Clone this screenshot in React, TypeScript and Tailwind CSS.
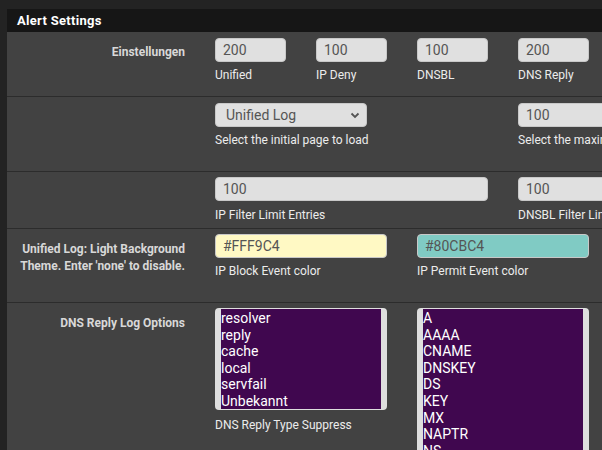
import React from "react";

const font = { fontFamily: "Roboto, 'Liberation Sans', sans-serif" };

function TextBox({ value, width, bg = "bg-[#e0e0e0]" }: { value: string; width: string; bg?: string }) {
  return (
    <div
      className={`${width} ${bg} h-[24px] rounded-[4px] border border-[#c8c8c8] pl-[7px] flex items-center text-[14px] text-[#555]`}
    >
      {value}
    </div>
  );
}

function Help({ children, mt = "mt-[6px]" }: { children: React.ReactNode; mt?: string }) {
  return <div className={`${mt} text-[12px] leading-[14px] text-[#ececec] whitespace-nowrap`}>{children}</div>;
}

function RowLabel({ children, top = "pt-[12px]" }: { children?: React.ReactNode; top?: string }) {
  return (
    <div className={`w-[208px] shrink-0 pr-[30px] ${top} text-right text-[12px] leading-[17px] font-bold text-[#d8d8d8]`}>
      {children}
    </div>
  );
}

function ListBox({ items, height }: { items: string[]; height: string }) {
  return (
    <div className={`${height} w-full rounded-[4px] bg-[#dedede] px-[6px] py-[1px] overflow-hidden`}>
      <div className="h-full bg-[#40074f] text-white text-[14px] leading-[16.6px] pt-[1px]">
        {items.map((it) => (
          <div key={it}>{it}</div>
        ))}
      </div>
    </div>
  );
}

export default function App() {
  return (
    <div className="w-[602px] h-[450px] overflow-hidden bg-[#232323] pt-[9px] pl-[7px]" style={font}>
      <div className="w-[800px]">
        {/* Header */}
        <div className="h-[23px] bg-[#161616] pl-[10px] flex items-center text-[13px] font-bold text-white tracking-[0.3px]">
          Alert Settings
        </div>

        <div className="bg-[#424242] h-[420px]">
          {/* Row 1 */}
          <div className="flex h-[64px] pt-[6px]">
            <RowLabel top="pt-[6px]">Einstellungen</RowLabel>
            <div className="flex">
              {[
                ["200", "Unified"],
                ["100", "IP Deny"],
                ["100", "DNSBL"],
                ["200", "DNS Reply"],
              ].map(([v, l], i) => (
                <div key={i} className="w-[101px] pr-[30px]">
                  <TextBox value={v} width="w-[71px]" />
                  <Help>{l}</Help>
                </div>
              ))}
            </div>
          </div>

          {/* Row 2 */}
          <div className="flex h-[75px] pt-[5px] border-t border-[#2c2c2c]">
            <RowLabel />
            <div className="flex">
              <div className="w-[303px] pr-[30px] pt-[1px]">
                <div className="w-[152px] h-[24px] rounded-[4px] bg-[#e0e0e0] border border-[#c8c8c8] pl-[10px] pr-[6px] flex items-center justify-between text-[14px] text-[#555]">
                  <span>Unified Log</span>
                  <svg width="10" height="8" viewBox="0 0 10 8" fill="none">
                    <path d="M1.5 2.5L5 6L8.5 2.5" stroke="#555" strokeWidth="1.8" />
                  </svg>
                </div>
                <Help>Select the initial page to load</Help>
              </div>
              <div className="w-[202px] pt-[1px]">
                <TextBox value="100" width="w-[172px]" />
                <Help>Select the maximum number of entries</Help>
              </div>
            </div>
          </div>

          {/* Row 3 */}
          <div className="flex h-[57px] pt-[5px] border-t border-[#2c2c2c]">
            <RowLabel />
            <div className="flex">
              <div className="w-[303px] pr-[30px]">
                <TextBox value="100" width="w-[273px]" />
                <Help mt="mt-[7px]">IP Filter Limit Entries</Help>
              </div>
              <div className="w-[303px]">
                <TextBox value="100" width="w-[273px]" />
                <Help mt="mt-[7px]">DNSBL Filter Limit Entries</Help>
              </div>
            </div>
          </div>

          {/* Row 4 */}
          <div className="flex h-[74px] pt-[5px] border-t border-[#2c2c2c]">
            <RowLabel top="pt-[7px]">
              Unified Log: Light Background
              <br />
              Theme. Enter 'none' to disable.
            </RowLabel>
            <div className="flex">
              <div className="w-[202px] pr-[30px]">
                <TextBox value="#FFF9C4" width="w-[172px]" bg="bg-[#fff9c4]" />
                <Help>IP Block Event color</Help>
              </div>
              <div className="w-[202px] pr-[30px]">
                <TextBox value="#80CBC4" width="w-[172px]" bg="bg-[#80cbc4]" />
                <Help>IP Permit Event color</Help>
              </div>
            </div>
          </div>

          {/* Row 5 */}
          <div className="flex pt-[5px] border-t border-[#2c2c2c]">
            <RowLabel top="pt-[7px]">DNS Reply Log Options</RowLabel>
            <div className="flex">
              <div className="w-[202px] pr-[30px]">
                <ListBox
                  height="h-[102px]"
                  items={["resolver", "reply", "cache", "local", "servfail", "Unbekannt"]}
                />
                <Help mt="mt-[8px]">DNS Reply Type Suppress</Help>
              </div>
              <div className="w-[202px] pr-[30px]">
                <ListBox
                  height="h-[200px]"
                  items={["A", "AAAA", "CNAME", "DNSKEY", "DS", "KEY", "MX", "NAPTR", "NS", "PTR", "SOA", "SRV"]}
                />
              </div>
            </div>
          </div>
        </div>
      </div>
    </div>
  );
}
